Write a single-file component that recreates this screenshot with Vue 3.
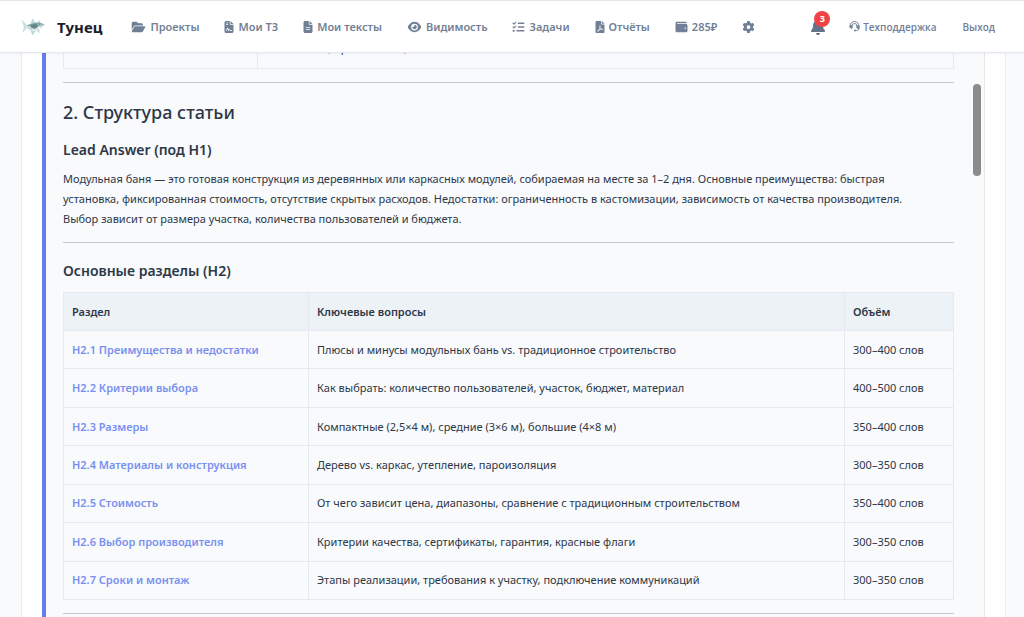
<script setup>
const icons = {
  folder: {
    box: '0 0 576 512',
    d: 'M88.7 223.8L0 375.8V96C0 60.7 28.7 32 64 32H181.5c17 0 33.3 6.7 45.3 18.7l26.5 26.5c12 12 28.3 18.7 45.3 18.7H416c35.3 0 64 28.7 64 64v32H144c-22.8 0-43.8 12.1-55.3 31.8zm27.6 16.1C122.1 230 132.6 224 144 224H544c11.5 0 22 6.1 27.7 16.1s5.7 22.2-.1 32.1l-112 192C453.9 474 443.4 480 432 480H32c-11.5 0-22-6.1-27.7-16.1s-5.7-22.2 .1-32.1l112-192z'
  },
  contract: {
    box: '0 0 384 512',
    d: 'M64 0C28.7 0 0 28.7 0 64V448c0 35.3 28.7 64 64 64H320c35.3 0 64-28.7 64-64V160H256c-17.7 0-32-14.3-32-32V0H64zM256 0V128H384L256 0zM80 64h64a16 16 0 0 1 0 32H80a16 16 0 0 1 0-32zm0 64h64a16 16 0 0 1 0 32H80a16 16 0 0 1 0-32zM64 416l40-112c8-24 42-24 50 0l20 62c14-14 42-14 54 4l12 14h64c22 0 22 32 0 32h-70c-10 0-18-5-24-14l-10-16-18 24c-8 10-24 8-28-4l-25-78-22 66c-7 22-18 34-38 34H80z'
  },
  lines: {
    box: '0 0 384 512',
    d: 'M64 0C28.7 0 0 28.7 0 64V448c0 35.3 28.7 64 64 64H320c35.3 0 64-28.7 64-64V160H256c-17.7 0-32-14.3-32-32V0H64zM256 0V128H384L256 0zM112 256H272a16 16 0 0 1 0 32H112a16 16 0 0 1 0-32zm0 96H272a16 16 0 0 1 0 32H112a16 16 0 0 1 0-32z'
  },
  eye: {
    box: '0 0 576 512',
    d: 'M288 32c-80.8 0-145.5 36.8-192.6 80.6C48.6 156 17.3 208 2.5 243.7c-3.3 7.9-3.3 16.7 0 24.6C17.3 304 48.6 356 95.4 399.4C142.5 443.2 207.2 480 288 480s145.5-36.8 192.6-80.6c46.8-43.5 78.1-95.4 93-131.1c3.3-7.9 3.3-16.7 0-24.6c-14.9-35.7-46.2-87.7-93-131.1C433.5 68.8 368.8 32 288 32zM144 256a144 144 0 1 1 288 0 144 144 0 1 1 -288 0zm144-64c0 35.3-28.7 64-64 64c-7.1 0-13.9-1.2-20.3-3.3c-5.5-1.8-11.9 1.6-11.7 7.4c.3 6.9 1.3 13.8 3.2 20.7c13.7 51.2 66.4 81.6 117.6 67.9s81.6-66.4 67.9-117.6c-11.1-41.5-47.8-69.4-88.6-71.1c-5.8-.2-9.2 6.1-7.4 11.7c2.1 6.4 3.3 13.2 3.3 20.3z'
  },
  tasks: {
    box: '0 0 512 512',
    d: 'M152 38a24 24 0 0 1 2 34l-72 80a24 24 0 0 1-35 1L7 113a24 24 0 0 1 34-34l22 22 55-61a24 24 0 0 1 34-2zm0 160a24 24 0 0 1 2 34l-72 80a24 24 0 0 1-35 1L7 273a24 24 0 0 1 34-34l22 22 55-61a24 24 0 0 1 34-2zM256 64H480a32 32 0 0 1 0 64H256a32 32 0 0 1 0-64zm0 160H480a32 32 0 0 1 0 64H256a32 32 0 0 1 0-64zM192 384H480a32 32 0 0 1 0 64H192a32 32 0 0 1 0-64zM48 368a48 48 0 1 1 0 96 48 48 0 1 1 0-96z'
  },
  report: {
    box: '0 0 384 512',
    d: 'M48 0C21 0 0 21 0 48V464c0 27 21 48 48 48H336c27 0 48-21 48-48V144H264c-13 0-24-11-24-24V0H48zM272 0V112H384L272 0zM184 192c34 0 36 54 22 88 12 24 25 39 42 51 50-8 82 2 76 28-6 27-48 22-84 4-28 5-51 12-75 22-34 60-66 78-83 61-22-23 13-62 61-83 17-30 27-56 34-80-16-42-21-91 7-91zm2 28c-4 12-2 30 4 44 5-16 5-34-4-44zm5 92c-6 16-12 29-18 41 14-5 29-10 44-13-10-8-19-17-26-28zM132 390c-18 10-30 23-34 32 12-2 24-14 34-32zM270 350c14 6 28 8 32 4 1-4-12-6-32-4z'
  },
  wallet: {
    box: '0 0 512 512',
    d: 'M64 32C28.7 32 0 60.7 0 96V416c0 35.3 28.7 64 64 64H448c35.3 0 64-28.7 64-64V192c0-35.3-28.7-64-64-64H80c-8.8 0-16-7.2-16-16s7.2-16 16-16H448c17.7 0 32-14.3 32-32s-14.3-32-32-32H64zM416 272a32 32 0 1 1 0 64 32 32 0 1 1 0-64z'
  },
  gear: {
    box: '0 0 512 512',
    d: 'M495.9 166.6c3.2 8.7 .5 18.4-6.4 24.6l-43.3 39.4c1.1 8.3 1.7 16.8 1.7 25.4s-.6 17.1-1.7 25.4l43.3 39.4c6.9 6.2 9.6 15.9 6.4 24.6c-4.4 11.9-9.7 23.3-15.8 34.3l-4.7 8.1c-6.6 11-14 21.4-22.1 31.2c-5.9 7.2-15.7 9.6-24.5 6.8l-55.7-17.7c-13.4 10.3-28.2 18.9-44 25.4l-12.5 57.1c-2 9.1-9 16.3-18.2 17.8c-13.8 2.3-28 3.5-42.5 3.5s-28.7-1.2-42.5-3.5c-9.2-1.5-16.2-8.7-18.2-17.8l-12.5-57.1c-15.8-6.5-30.6-15.1-44-25.4L83.1 425.9c-8.8 2.8-18.6 .3-24.5-6.8c-8.1-9.8-15.5-20.2-22.1-31.2l-4.7-8.1c-6.1-11-11.4-22.4-15.8-34.3c-3.2-8.7-.5-18.4 6.4-24.6l43.3-39.4C64.6 273.1 64 264.6 64 256s.6-17.1 1.7-25.4L22.4 191.2c-6.9-6.2-9.6-15.9-6.4-24.6c4.4-11.9 9.7-23.3 15.8-34.3l4.7-8.1c6.6-11 14-21.4 22.1-31.2c5.9-7.2 15.7-9.6 24.5-6.8l55.7 17.7c13.4-10.3 28.2-18.9 44-25.4l12.5-57.1c2-9.1 9-16.3 18.2-17.8C227.3 1.2 241.5 0 256 0s28.7 1.2 42.5 3.5c9.2 1.5 16.2 8.7 18.2 17.8l12.5 57.1c15.8 6.5 30.6 15.1 44 25.4l55.7-17.7c8.8-2.8 18.6-.3 24.5 6.8c8.1 9.8 15.5 20.2 22.1 31.2l4.7 8.1c6.1 11 11.4 22.4 15.8 34.3zM256 336a80 80 0 1 0 0-160 80 80 0 1 0 0 160z'
  }
}

const nav = [
  { icon: 'folder', label: 'Проекты' },
  { icon: 'contract', label: 'Мои ТЗ' },
  { icon: 'lines', label: 'Мои тексты' },
  { icon: 'eye', label: 'Видимость' },
  { icon: 'tasks', label: 'Задачи' },
  { icon: 'report', label: 'Отчёты' },
  { icon: 'wallet', label: '285₽' },
  { icon: 'gear', label: '' }
]

const sections = [
  ['H2.1 Преимущества и недостатки', 'Плюсы и минусы модульных бань vs. традиционное строительство', '300–400 слов'],
  ['H2.2 Критерии выбора', 'Как выбрать: количество пользователей, участок, бюджет, материал', '400–500 слов'],
  ['H2.3 Размеры', 'Компактные (2,5×4 м), средние (3×6 м), большие (4×8 м)', '350–400 слов'],
  ['H2.4 Материалы и конструкция', 'Дерево vs. каркас, утепление, пароизоляция', '300–350 слов'],
  ['H2.5 Стоимость', 'От чего зависит цена, диапазоны, сравнение с традиционным строительством', '350–400 слов'],
  ['H2.6 Выбор производителя', 'Критерии качества, сертификаты, гарантия, красные флаги', '300–350 слов'],
  ['H2.7 Сроки и монтаж', 'Этапы реализации, требования к участку, подключение коммуникаций', '300–350 слов']
]
</script>

<template>
  <div class="page">
    <header class="topbar">
      <a class="brand" href="#">
        <svg class="fish" viewBox="0 0 50 36" aria-hidden="true">
          <path d="M1 2l10 11 5 4-5 4-8 10 3-13z" fill="#c2dfde" />
          <path d="M20 10l4-10 6 9zM19 24l5 11 7-9zM33 8l6-4 1 5zM32 25l7 6-1-9z" fill="#bcd9d8" />
          <path d="M9 17c8-7 18-10 29-8l12 4c-3 7-11 12-21 14-7 0-13-3-20-10z" fill="#dfe9ea" />
          <path d="M11 16c10-6 19-9 29-7l9 4-11 3-10 3-9-2z" fill="#86a8ac" />
          <path d="M20 14l11-3 5 6-8 5-7-3z" fill="#64848c" />
          <path d="M34 11l14 2-10 3z" fill="#9cc4c2" />
          <path d="M37 17l11-3-7 8-7 2z" fill="#fff" />
          <path d="M31 18l6 6M15 19l8 4M37 17l10-3M39 20l5-3" stroke="#7d9ba1" fill="none" />
          <circle cx="38" cy="12" r="1" fill="#273d48" />
        </svg>
        <span>Тунец</span>
      </a>
      <nav class="menu">
        <a v-for="item in nav" :key="item.icon" href="#" :aria-label="item.label || 'Настройки'">
          <svg class="icon" :class="item.icon" :viewBox="icons[item.icon].box" aria-hidden="true">
            <path :d="icons[item.icon].d" fill="currentColor" fill-rule="evenodd" />
          </svg>
          <span v-if="item.label">{{ item.label }}</span>
        </a>
      </nav>
      <div class="account">
        <button class="bell" type="button" aria-label="Уведомления">
          <svg viewBox="0 0 448 512" aria-hidden="true">
            <path fill="currentColor" d="M224 0c-17.7 0-32 14.3-32 32V51.2C119 66 64 130.6 64 208v18.8c0 47-17.3 92.4-48.5 127.6l-7.4 8.3c-8.4 9.4-10.4 22.9-5.3 34.4S19.4 416 32 416H416c12.6 0 24-7.4 29.2-18.9s3.1-25-5.3-34.4l-7.4-8.3C401.3 319.2 384 273.9 384 226.8V208c0-77.4-55-142-128-156.8V32c0-17.7-14.3-32-32-32zm45.3 493.3c12-12 18.7-28.3 18.7-45.3H160c0 17 6.7 33.3 18.7 45.3s28.3 18.7 45.3 18.7s33.3-6.7 45.3-18.7z" />
          </svg>
          <span class="badge">3</span>
        </button>
        <a class="support" href="#">
          <svg viewBox="0 0 22 22" aria-hidden="true" fill="none" stroke="currentColor" stroke-width="2">
            <path d="M2 12V10a9 9 0 0 1 18 0v5c0 3-2 4-5 4h-3" />
            <path d="M6 14V10a5 5 0 0 1 10 0v4" />
            <path d="M2 9h4v6H4l-2-2zM16 9h4v6h-4z" fill="currentColor" stroke-width="1" />
            <path d="M10 19h4" stroke-width="3" />
          </svg>
          <span>Техподдержка</span>
        </a>
        <a class="logout" href="#">Выход</a>
      </div>
    </header>

    <main class="card">
      <div class="viewer">
        <article class="doc">
          <table class="summary">
            <colgroup><col class="key"><col></colgroup>
            <tbody>
              <tr><td></td><td>Новостной (стр. и каталог)</td></tr>
            </tbody>
          </table>
          <hr>
          <h2>2. Структура статьи</h2>
          <h3>Lead Answer (под H1)</h3>
          <p>Модульная баня — это готовая конструкция из деревянных или каркасных модулей, собираемая на месте за 1–2 дня. Основные преимущества: быстрая установка, фиксированная стоимость, отсутствие скрытых расходов. Недостатки: ограниченность в кастомизации, зависимость от качества производителя. Выбор зависит от размера участка, количества пользователей и бюджета.</p>
          <hr>
          <h3>Основные разделы (H2)</h3>
          <table class="sections">
            <colgroup><col class="name"><col><col class="size"></colgroup>
            <thead>
              <tr><th scope="col">Раздел</th><th scope="col">Ключевые вопросы</th><th scope="col">Объём</th></tr>
            </thead>
            <tbody>
              <tr v-for="row in sections" :key="row[0]">
                <td><strong>{{ row[0] }}</strong></td>
                <td>{{ row[1] }}</td>
                <td>{{ row[2] }}</td>
              </tr>
            </tbody>
          </table>
          <hr>
        </article>
        <div class="track"><div class="thumb"></div></div>
      </div>
    </main>
  </div>
</template>

<style>
body {
  margin: 0;
  background: #f8fafc;
}
</style>

<style scoped>
* {
  box-sizing: border-box;
}
.page {
  height: 100vh;
  display: flex;
  flex-direction: column;
  overflow: hidden;
  font-family: "Noto Sans", "Open Sans", sans-serif;
  font-size: 11px;
  color: #2d3748;
}
a {
  color: inherit;
  text-decoration: none;
}
.topbar {
  flex: none;
  height: 53px;
  display: flex;
  align-items: center;
  padding: 0 29px 0 21px;
  background: #fff;
  border-top: 1px solid #e5e5e5;
  border-bottom: 1px solid #e2e8f0;
  box-shadow: 0 1px 2px rgba(45, 55, 120, 0.06);
  color: #718096;
  font-weight: 600;
  z-index: 1;
}
.brand {
  display: flex;
  align-items: center;
  gap: 12px;
  margin-right: 29px;
  font-size: 15px;
  font-weight: 700;
  color: #1a202c;
}
.fish {
  width: 24px;
  height: 18px;
}
.menu {
  display: flex;
  gap: 25px;
}
.menu a {
  display: flex;
  align-items: center;
  gap: 4px;
}
.icon {
  height: 12px;
  width: 13px;
}
.icon.folder,
.icon.eye {
  width: 15px;
}
.icon.contract,
.icon.lines,
.icon.report {
  width: 10px;
}
.account {
  margin-left: auto;
  display: flex;
  align-items: center;
  font-family: "Open Sans", "Noto Sans", sans-serif;
  font-size: 10px;
}
.bell {
  position: relative;
  display: flex;
  padding: 0;
  border: 0;
  background: none;
  color: #64748b;
  margin-right: 24px;
}
.bell svg {
  width: 14px;
  height: 16px;
}
.badge {
  position: absolute;
  left: 3px;
  top: -8px;
  width: 16px;
  height: 16px;
  border-radius: 50%;
  background: #ef4444;
  color: #fff;
  font: 700 9px/16px "Open Sans", sans-serif;
  text-align: center;
}
.support {
  display: flex;
  align-items: center;
  gap: 3px;
  margin-right: 26px;
}
.support svg {
  width: 11px;
  height: 11px;
}
.card {
  flex: 1;
  min-height: 0;
  display: flex;
  margin: 0 18px 0 21px;
  padding: 0 20px;
  background: #fff;
  border: solid #e8ecf4;
  border-width: 0 1px;
}
.viewer {
  flex: 1;
  min-width: 0;
  display: flex;
  overflow: hidden;
  background: #f8fafc;
  border-left: 4px solid #667eea;
  border-right: 1px solid #e2e8f0;
}
.doc {
  flex: 1;
  min-width: 0;
  margin-top: -27px;
  padding: 0 18px 0 17px;
}
.track {
  flex: none;
  width: 12px;
  padding: 31px 3px 0 1px;
  background: #fafafa;
}
.thumb {
  height: 92px;
  border-radius: 4px;
  background: #8b8b8b;
}
table {
  width: 100%;
  border-collapse: collapse;
  table-layout: fixed;
}
.sections {
  height: 308px;
  margin-top: 9px;
}
th,
td {
  height: 38px;
  padding: 0 8px;
  border: 1px solid #e5e9f2;
  text-align: left;
  line-height: 20px;
}
.summary td {
  height: 42px;
}
th {
  background: #edf2f7;
  font-weight: 600;
}
strong {
  font-weight: 600;
  color: #7890f0;
}
.key {
  width: 194px;
}
.name {
  width: 245px;
}
.size {
  width: 109px;
}
hr {
  height: 1px;
  margin: 13px 0 14px;
  border: 0;
  background: #c8ccd2;
}
h2 {
  margin: 0 0 11px;
  font-size: 18px;
  line-height: 30px;
  font-weight: 500;
}
h3 {
  margin: 0 0 7px;
  font-size: 14px;
  line-height: 24px;
  font-weight: 600;
}
hr + h3 {
  margin-top: 16px;
}
p {
  margin: 0;
  padding-right: 32px;
  line-height: 20px;
}
</style>
